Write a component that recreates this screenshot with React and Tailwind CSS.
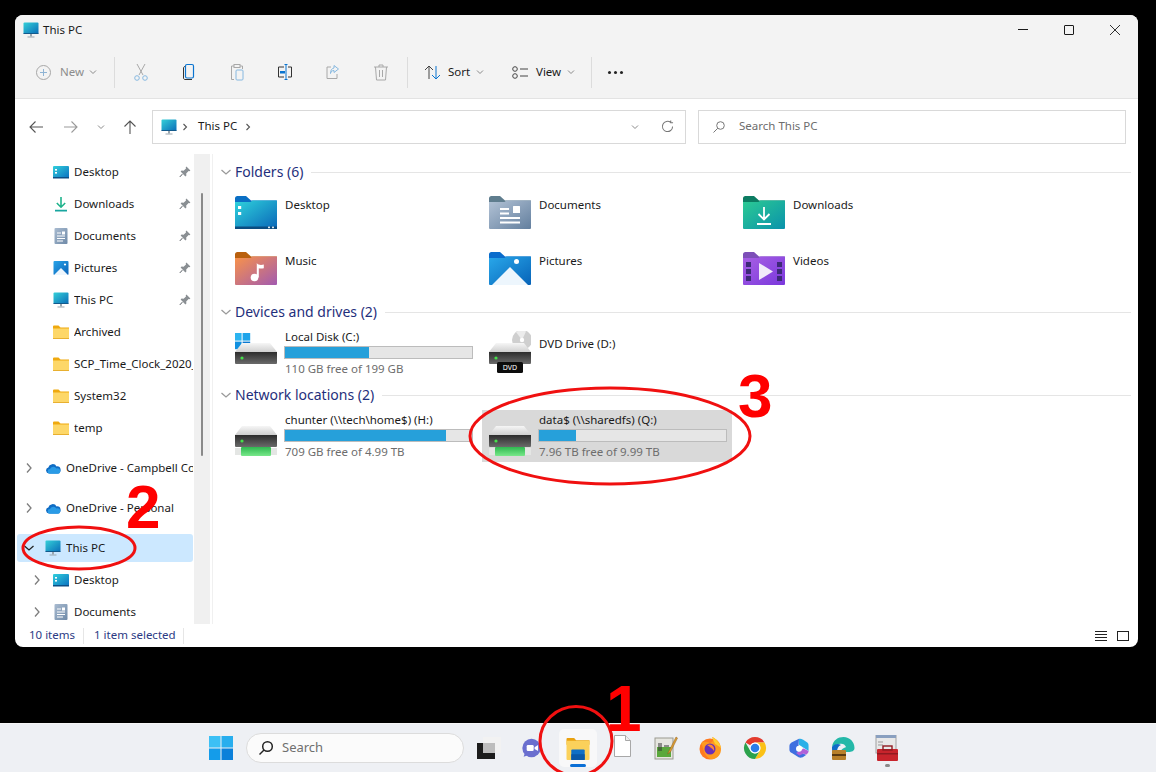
import { useId } from "react";

function Grad({ id, from, to, x2 = 1, y2 = 1 }) {
  return (
    <linearGradient id={id} x1="0" y1="0" x2={x2} y2={y2}>
      <stop offset="0" stopColor={from} />
      <stop offset="1" stopColor={to} />
    </linearGradient>
  );
}

function Monitor({ className = "w-4 h-4" }) {
  const id = useId();
  return (
    <svg viewBox="0 0 16 16" className={className}>
      <defs>
        <Grad id={id} from="#34d0d8" to="#0a6cb8" />
      </defs>
      <rect x="0.5" y="0.5" width="15" height="11.5" rx="1" fill={`url(#${id})`} />
      <rect x="0.5" y="11" width="15" height="1" fill="#135a8c" />
      <rect x="7" y="12" width="2" height="2.5" fill="#9aa5ad" />
      <rect x="4.5" y="14.5" width="7" height="1" fill="#9aa5ad" />
    </svg>
  );
}

function SmallFolder() {
  return (
    <svg viewBox="0 0 16 14" className="w-4 h-[14px]">
      <path d="M0 1.5A1 1 0 0 1 1 .5h4.5l2 2H16V5H0z" fill="#efa90f" />
      <path d="M0 3.5h16V13a1 1 0 0 1-1 1H1a1 1 0 0 1-1-1z" fill="#fdd768" />
      <rect y="13" width="16" height="1" fill="#e8b030" />
    </svg>
  );
}

function SmallDesktop() {
  const id = useId();
  return (
    <svg viewBox="0 0 16 13" className="w-4 h-[13px]">
      <defs>
        <Grad id={id} from="#32d0dc" to="#0a70c0" />
      </defs>
      <rect width="16" height="12" rx="1" fill={`url(#${id})`} />
      <rect y="11" width="16" height="1.5" fill="#0c4f86" />
      <rect x="2" y="3" width="2" height="1.6" fill="#fff" />
      <rect x="2" y="6" width="2" height="1.6" fill="#fff" />
    </svg>
  );
}

function SmallDownload() {
  return (
    <svg viewBox="0 0 16 16" className="w-4 h-4" fill="none" stroke="#1fb38c" strokeWidth="1.6">
      <path d="M8 1v10M3.8 7 8 11.2 12.2 7" />
      <path d="M2 14.6h12" stroke="#19a6a0" />
    </svg>
  );
}

function SmallDoc() {
  const id = useId();
  return (
    <svg viewBox="0 0 16 16" className="w-4 h-4">
      <defs>
        <Grad id={id} from="#a9bbd0" to="#6f8aa8" />
      </defs>
      <rect x="1.5" width="13" height="16" rx="1" fill={`url(#${id})`} />
      <path d="M4 5h4M4 8h8M4 10.5h8M4 13h6" stroke="#fff" strokeWidth="1" />
      <rect x="9" y="3.5" width="3" height="3" fill="#fff" />
    </svg>
  );
}

function SmallPictures() {
  const id = useId();
  return (
    <svg viewBox="0 0 16 16" className="w-4 h-4">
      <defs>
        <Grad id={id} from="#2aa4e8" to="#0a62b8" />
      </defs>
      <rect x="0.5" y="1" width="15" height="14" rx="1" fill={`url(#${id})`} />
      <circle cx="12" cy="4.5" r="1.1" fill="#fff" />
      <path d="M1 15 8 8l7 7z" fill="#eef6fd" />
    </svg>
  );
}

function Cloud() {
  return (
    <svg viewBox="0 0 16 11" className="w-4 h-[11px]">
      <path d="M4 10.5A3 3 0 0 1 3.3 4.6 4.5 4.5 0 0 1 11.6 3.4 3.5 3.5 0 0 1 12.5 10.5z" fill="#0f6cc4" />
      <path d="M5 10.8A2.4 2.4 0 0 1 5 6a3.5 3.5 0 0 1 6.4-.5 2.7 2.7 0 0 1 3.6 3.6 2 2 0 0 1-1.6 1.7z" fill="#2a9be6" />
    </svg>
  );
}

function Pin() {
  return (
    <svg viewBox="0 0 12 12" className="w-3 h-3" fill="#8a8f93">
      <path d="M7.4.6 11.4 4.6 10.4 5.3 9.6 5 7.2 7.4 7.4 9.4 6.4 10.4 1.6 5.6 2.6 4.6 4.6 4.8 7 2.4 6.7 1.6z" />
      <path d="M3.4 8.6 1 11l-.2-.2L3 8.2z" stroke="#8a8f93" strokeWidth="0.8" />
    </svg>
  );
}

function Chev({ dir = "right", className = "" }) {
  const d = dir === "right" ? "M4 1.5 8 6 4 10.5" : "M1.5 4 6 8l4.5-4";
  return (
    <svg viewBox="0 0 12 12" className={`w-3 h-3 ${className}`} fill="none" stroke="currentColor" strokeWidth="1.3">
      <path d={d} />
    </svg>
  );
}

function TinyChev() {
  return (
    <svg viewBox="0 0 8 8" className="w-2 h-2 text-[#8a8a8a]" fill="none" stroke="currentColor" strokeWidth="1">
      <path d="M1 2.5 4 5.5 7 2.5" />
    </svg>
  );
}

function TinyRight() {
  return (
    <svg viewBox="0 0 8 8" className="w-2 h-2 shrink-0" fill="none" stroke="#555" strokeWidth="1.1">
      <path d="M2.500 1 5.500 4 2.500 7" />
    </svg>
  );
}

function LibFolder({ from, to, tab, children }) {
  const id = useId();
  return (
    <svg viewBox="0 0 42 33" className="w-[42px] h-[33px] shrink-0">
      <defs>
        <Grad id={id} from={from} to={to} />
      </defs>
      <path d="M0 2.5A2.5 2.5 0 0 1 2.5 0h8.5l5 4.5h26V9H0z" fill={tab} />
      <path d="M0 6h15.5l2-1.6H41a1 1 0 0 1 1 1V32a1 1 0 0 1-1 1H1a1 1 0 0 1-1-1z" fill={`url(#${id})`} />
      {children}
    </svg>
  );
}

const folderIcons = {
  Desktop: (
    <LibFolder from="#2fd3dc" to="#0a66b8" tab="#0a6fc4">
      <rect y="30.5" width="42" height="2.5" fill="#0b4c80" />
      <rect x="3" y="10" width="3.2" height="3" fill="#fff" />
      <rect x="3" y="16" width="3.2" height="3" fill="#fff" />
      <rect x="33" y="30.6" width="2" height="1.6" fill="#dfe8ee" />
      <rect x="37" y="30.6" width="2" height="1.6" fill="#dfe8ee" />
    </LibFolder>
  ),
  Documents: (
    <LibFolder from="#b3c3d6" to="#637f9e" tab="#5f7d8e">
      <path d="M11 13h9M11 17.5h9M11 22h20M11 26.5h20" stroke="#fff" strokeWidth="1.8" />
      <rect x="24" y="10" width="7" height="7" rx="0.6" fill="#fff" />
    </LibFolder>
  ),
  Downloads: (
    <LibFolder from="#2ccb93" to="#0a92ab" tab="#0c7c62">
      <path d="M21 11v12M15.5 18l5.5 5.5 5.5-5.5" stroke="#fff" strokeWidth="1.8" fill="none" />
      <path d="M14 28h14" stroke="#fff" strokeWidth="1.8" />
    </LibFolder>
  ),
  Music: (
    <LibFolder from="#f99349" to="#a25ab0" tab="#b9600e">
      <circle cx="19.5" cy="25.5" r="3.8" fill="#fff" />
      <path d="M21.8 25.5V11c1.2 2.4 5 2 7 1.6v3.6c-2 .4-3.8.4-5 0v9.3z" fill="#fff" />
    </LibFolder>
  ),
  Pictures: (
    <LibFolder from="#29a8ea" to="#0763b8" tab="#0a6ccc">
      <circle cx="27.5" cy="9.5" r="2.5" fill="#fff" />
      <path d="M3 33 21 15l18 18z" fill="#edf6fd" />
    </LibFolder>
  ),
  Videos: (
    <LibFolder from="#a860e4" to="#7a38dc" tab="#7d4fb8">
      <path d="M16 11l14 8.5L16 28z" fill="#f1eafa" />
      <path d="M3 10h5v5H3zM3 17h5v5H3zM3 24h5v5H3zM34 10h5v5h-5zM34 17h5v5h-5zM34 24h5v5h-5z" fill="#3d2a78" />
    </LibFolder>
  ),
};

function DriveIcon({ kind }) {
  const id = useId();
  const id2 = useId();
  const id3 = useId();
  return (
    <svg viewBox="0 0 42 44" className="w-[42px] h-[44px] shrink-0">
      <defs>
        <Grad id={id} from="#f6f6f6" to="#cfcfcf" x2={0} />
        <Grad id={id2} from="#2c2c2c" to="#6a6a6a" x2={0} />
        <Grad id={id3} from="#2fb850" to="#78e88a" x2={0} />
      </defs>
      {kind === "local" && (
        <g>
          <rect x="-1" y="2" width="7.6" height="7.6" fill="#2cb4f0" />
          <rect x="7.600" y="2" width="7.6" height="7.6" fill="#1ea4ea" />
          <rect x="-1" y="10.600" width="7.6" height="7.6" fill="#1090e0" />
          <rect x="7.600" y="10.600" width="7.6" height="7.6" fill="#0a78d0" />
        </g>
      )}
      {kind === "dvd" && (
        <g>
          <circle cx="33" cy="9" r="10" fill="#cfcfcf" />
          <path d="M33 9 27 1a10 10 0 0 1 10-.6z" fill="#ececec" />
          <circle cx="33" cy="9" r="2.200" fill="#fff" />
        </g>
      )}
      <path d="M7 12h28l7 9H0z" fill={`url(#${id})`} />
      <path d="M0 21h42v11a1 1 0 0 1-1 1H1a1 1 0 0 1-1-1z" fill={`url(#${id2})`} />
      <circle cx="7" cy="27" r="1.6" fill="#45e04a" />
      {kind === "net" && (
        <g>
          <rect x="0" y="34" width="42" height="7" fill="#e4e6e4" />
          <rect x="6" y="33" width="30" height="9" rx="1" fill={`url(#${id3})`} />
        </g>
      )}
      {kind === "dvd" && <rect x="8" y="31" width="26" height="11" rx="1.500" fill="#0c0c0c" />}
    </svg>
  );
}

function Sep() {
  return <div className="w-px h-[31px] bg-[#dcdcdc] shrink-0" />;
}

function ToolIcon({ children }) {
  return (
    <div className="w-12 flex justify-center shrink-0">
      <svg viewBox="0 0 18 18" className="w-[18px] h-[18px]" fill="none" strokeWidth="1">
        {children}
      </svg>
    </div>
  );
}

function SideRow({ icon, label, level = 1, chevron, pinned, selected }) {
  return (
    <div className="h-8 py-0.5 pl-[2px]">
      <div className={`w-[176px] h-7 flex items-center rounded-[3px] ${selected ? "bg-[#cce8ff]" : ""} ${level === 1 ? "pl-[12px]" : "pl-[4px]"}`}>
        <div className="w-4 shrink-0 flex justify-center">
          {chevron === "right" && <Chev className="text-[#7d7d7d]" />}
          {chevron === "down" && <Chev dir="down" className="text-[#222]" />}
        </div>
        <div className="ml-2 w-4 shrink-0 flex justify-center">{icon}</div>
        <span className="ml-[5px] flex-1 min-w-0 overflow-hidden whitespace-nowrap text-[#1a1a1a]">{label}</span>
        {pinned && (
          <span className="mr-[2px] ml-1 shrink-0">
            <Pin />
          </span>
        )}
      </div>
    </div>
  );
}

function Heading({ label, mt }) {
  return (
    <div className={`flex items-center h-5 ${mt}`}>
      <Chev dir="down" className="text-[#9a9a9a]" />
      <span className="ml-[3px] text-[14px] leading-5 text-[#1f2f7c] whitespace-nowrap">{label}</span>
      <div className="ml-2 flex-1 h-px bg-[#e5e5e5]" />
    </div>
  );
}

function FolderTile({ name }) {
  return (
    <div className="h-[52px] pl-[7px] pt-1 flex">
      {folderIcons[name]}
      <span className="ml-2 mt-[1px] text-[#1a1a1a]">{name}</span>
    </div>
  );
}

function DriveTile({ kind, name, pct, free, selected }) {
  return (
    <div className={`w-[250px] h-[52px] flex pl-[7px] pt-1 ${selected ? "bg-[#d9d9d9]" : ""}`}>
      <DriveIcon kind={kind} />
      <div className="ml-[7px] w-[189px] -mt-[2px]">
        <div className="h-4 pl-px text-[#1a1a1a] whitespace-nowrap">{name}</div>
        <div className="mt-[1px] h-[13px] border border-[#bcbcbc] bg-[#e6e6e6]">
          <div className="h-full bg-[#26a0da]" style={{ width: `${pct}%` }} />
        </div>
        <div className="mt-[2px] h-4 pl-px text-[#6d6d6d] whitespace-nowrap">{free}</div>
      </div>
    </div>
  );
}

function TaskIcon({ className, children, viewBox = "0 0 24 24" }) {
  return (
    <svg viewBox={viewBox} className={`shrink-0 ${className}`}>
      {children}
    </svg>
  );
}

function Taskbar() {
  return (
    <div className="h-[49px] bg-[#eef0f4] border-t border-[#f6f6f6] flex items-center pl-[209px]">
      <TaskIcon className="w-[24px] h-[24px]">
        <rect x="0" y="0" width="11.5" height="11.5" fill="#3cc0f5" />
        <rect x="12.5" y="0" width="11.5" height="11.5" fill="#28aeee" />
        <rect x="0" y="12.5" width="11.5" height="11.5" fill="#149cea" />
        <rect x="12.5" y="12.5" width="11.5" height="11.5" fill="#0a80da" />
      </TaskIcon>
      <div className="ml-[13px] w-[218px] h-[30px] rounded-full bg-[#fbfbfb] border border-[#dcdcdc] flex items-center pl-[11px]">
        <svg viewBox="0 0 16 16" className="w-4 h-4" fill="none" stroke="#222" strokeWidth="1.5">
          <circle cx="9.5" cy="6.5" r="4.8" />
          <path d="M6 10 1.5 14.5" />
        </svg>
        <span className="ml-[8px] pb-[2px] text-[13px] text-[#6f6f6f]">Search</span>
      </div>
      <TaskIcon className="ml-[13px] w-6 h-[22px]" viewBox="0 0 24 22">
        <rect x="6" y="0" width="18" height="16" fill="#f2f2f2" />
        <rect x="0" y="6" width="18" height="16" fill="#1c1c1c" />
        <rect x="6" y="6" width="12" height="10" fill="#bdbdbd" />
      </TaskIcon>
      <TaskIcon className="ml-[20px] w-[21px] h-[24px]">
        <circle cx="12" cy="12" r="10.5" fill="#6a6fcf" />
        <path d="M3 22l2-6 4 4z" fill="#6a6fcf" />
        <rect x="6.5" y="8.5" width="8" height="7" rx="1.5" fill="#fff" />
        <path d="M15.5 11l4-2.4v6.8l-4-2.4z" fill="#fff" />
      </TaskIcon>
      <div className="ml-[17px] w-[38px] h-[38px] rounded-[5px] bg-[#f8f8f9] flex flex-col items-center pt-2">
        <TaskIcon className="w-6 h-[23px]">
          <path d="M0 2a1 1 0 0 1 1-1h7l2 2.5h14V8H0z" fill="#e9a10f" />
          <path d="M0 4h24v19a1 1 0 0 1-1 1H1a1 1 0 0 1-1-1z" fill="#fbd15b" />
          <rect x="5" y="13" width="14" height="11" rx="1" fill="#0f6fc6" />
          <rect x="5" y="18" width="14" height="6" fill="#0a58a8" />
        </TaskIcon>
        <div className="mt-[4px] w-4 h-[3px] rounded-full bg-[#0a6fd6]" />
      </div>
      <TaskIcon className="ml-[17px] w-[17px] h-[22px] -mt-[5px]" viewBox="0 0 17 22">
        <path d="M.5.5h11l5 5v16H.5z" fill="#fff" stroke="#a8a8a8" />
        <path d="M11.5.5v5h5" fill="#eee" stroke="#a8a8a8" />
      </TaskIcon>
      <TaskIcon className="ml-[23px] w-6 h-6">
        <rect x="1" y="2" width="18" height="21" fill="#e6e6e0" stroke="#9a9a90" />
        <rect x="3" y="11" width="14" height="10" fill="#5aa83c" />
        <path d="M5 7v8M7 7v8M10 10h5" stroke="#333" strokeWidth="1" />
        <path d="M22 1 15 15l-1.5 3 3-2L23.5 2z" fill="#e0a030" stroke="#8a5a20" strokeWidth="0.5" />
      </TaskIcon>
      <TaskIcon className="ml-[20px] w-6 h-6">
        <circle cx="12" cy="13" r="10.5" fill="#ff7a1f" />
        <path d="M3 7c3 5 2 12 9 16 7 1 11-4 11-10S19 3 14 1c2 3 1 5-2 6-3-1-6-2-9 0z" fill="#ff9a20" />
        <path d="M14 1c4 2 8 6 9 11-2-2-4-3-6-4z" fill="#ffcf30" />
        <circle cx="12" cy="13" r="5.5" fill="#6a2fb8" />
        <path d="M9 9c5-2 8 2 7 6-2-3-4-4-7-6z" fill="#ff8a30" />
      </TaskIcon>
      <TaskIcon className="ml-[21px] w-6 h-6">
        <path d="M12 1a11 11 0 0 1 9.53 5.5H12a5.5 5.5 0 0 0-4.76 2.75L2.47 6.5A11 11 0 0 1 12 1z" fill="#e33b2e" />
        <path d="M21.53 6.5A11 11 0 0 1 12 23l4.76-8.25A5.5 5.5 0 0 0 12 6.5z" fill="#fbc116" />
        <path d="M2.47 6.5l4.77 8.25a5.5 5.5 0 0 0 9.52 0L12 23A11 11 0 0 1 2.47 6.5z" fill="#2ba24c" />
        <circle cx="12" cy="12" r="5.4" fill="#fff" />
        <circle cx="12" cy="12" r="4.3" fill="#2b7de9" />
      </TaskIcon>
      <TaskIcon className="ml-[22px] w-[20px] h-[24px]">
        <path d="M12 1 3 5.5C1 7 .5 8 .5 10v4c0 2 1 3 3 4l8 5c2 1 3 .5 5 0l4-2.5-6-3.5-3 1.5V8z" fill="#3f6fe0" />
        <path d="M12 1c2-.5 3 0 5 1l5 3.5c1 1 1.500 2 1.500 4v6L18 12l-6-4z" fill="#2ab0e8" />
        <path d="M23.500 15.500c0 2-1 3-3 4.500l-3-1.500-5 2.500-4-3 6-3.500 3-2z" fill="#b060d8" />
        <circle cx="12" cy="13" r="3.600" fill="#fff" />
      </TaskIcon>
      <TaskIcon className="ml-[22px] w-6 h-6">
        <path d="M1 11C2 4 7 1 12.500 1 19 1 23.500 6 23.500 12c0 3-3 4-6 4H10c0-3 3-4 5-5-1-3-4-4-7-3-4 1-6 2-7 3z" fill="#24b8a8" />
        <path d="M1 11c2-3 6-4 9-2-3 1-4 4-4 7 0 3 2 6 6 7C5 23 .5 18 1 11z" fill="#0f6cc8" />
        <rect x="1" y="14" width="14" height="10" rx="1" fill="#b8802a" />
        <rect x="1" y="18" width="14" height="2" fill="#5a3a10" />
      </TaskIcon>
      <div className="ml-[20px] w-6 flex flex-col items-center pt-[5px]">
        <TaskIcon className="w-6 h-[28px]" viewBox="0 0 24 28">
          <rect x="1" y="0" width="20" height="18" fill="#e8e8e8" stroke="#a0a0a0" />
          <rect x="1" y="0" width="20" height="3" fill="#8aa0c0" />
          <path d="M3 7h5M3 10h5" stroke="#999" />
          <rect x="2" y="14" width="21" height="12" rx="1" fill="#c8242c" />
          <rect x="8" y="11" width="9" height="4" fill="none" stroke="#901a20" strokeWidth="1.400" />
          <rect x="2" y="18" width="21" height="1.500" fill="#901a20" />
        </TaskIcon>
        <div className="mt-[1px] w-[5px] h-[3px] rounded-full bg-[#8a8a8a]" />
      </div>
    </div>
  );
}

export default function App() {
  return (
    <div className="relative w-[1156px] h-[772px] bg-black overflow-hidden flex flex-col text-[11.5px] leading-4 font-['Noto_Sans',sans-serif]">
      <div className="mt-[15px] ml-[15px] w-[1123px] h-[632px] rounded-lg bg-white overflow-hidden flex flex-col">
        {/* title + command bar */}
        <div className="h-[84px] shrink-0 bg-[#f3f3f3] border-b border-[#e3e3e3]">
          <div className="h-[31px] flex items-center pl-2 pb-[2px]">
            <Monitor />
            <span className="ml-1 text-[#1a1a1a]">This PC</span>
            <div className="ml-auto flex items-center text-[#1a1a1a]">
              <div className="w-[46px] flex justify-center">
                <div className="w-[10px] h-px bg-[#1a1a1a]" />
              </div>
              <div className="w-[46px] flex justify-center">
                <div className="w-[10px] h-[10px] border border-[#1a1a1a] rounded-[1px]" />
              </div>
              <div className="w-[46px] flex justify-center">
                <svg viewBox="0 0 10 10" className="w-[10px] h-[10px]" stroke="#1a1a1a" strokeWidth="0.9">
                  <path d="M0 0l10 10M10 0 0 10" />
                </svg>
              </div>
            </div>
          </div>
          <div className="h-[52px] flex items-center">
            <div className="ml-[21px] w-[78px] flex items-center">
              <svg viewBox="0 0 15 15" className="w-[15px] h-[15px]" fill="none" stroke="#a6a6a6">
                <circle cx="7.5" cy="7.500" r="7" />
                <path d="M7.500 4v7M4 7.500h7" stroke="#8fb4d4" />
              </svg>
              <span className="ml-[9px] w-[29px] text-[#8c8c8c]">New</span>
              <TinyChev />
            </div>
            <Sep />
            <div className="ml-[2px] flex">
              <ToolIcon>
                <path d="M5 1l6 11M13 1 7 12" stroke="#a8a8a8" />
                <circle cx="5" cy="15" r="2.300" stroke="#86b8e0" />
                <circle cx="13" cy="15" r="2.300" stroke="#86b8e0" />
              </ToolIcon>
              <ToolIcon>
                <rect x="5.500" y="1.500" width="8" height="13.500" rx="1.500" stroke="#0a74d0" strokeWidth="1.200" />
                <path d="M5 3.500c-.8 0-1.500.7-1.500 1.500v10c0 1 .8 1.500 1.500 1.500h7" stroke="#333" />
              </ToolIcon>
              <ToolIcon>
                <path d="M6 3H3.500v13.500H6M12 3h2.500v3" stroke="#a8a8a8" />
                <rect x="6" y="1.500" width="6" height="3" stroke="#a8a8a8" />
                <rect x="8" y="7" width="7" height="10" rx="1" stroke="#86b8e0" />
              </ToolIcon>
              <ToolIcon>
                <path d="M8 4H2.500v10H8M12 4h3.500v10H12" stroke="#333" />
                <rect x="4" y="8" width="5" height="2.500" fill="#0a74d0" />
                <path d="M10 2v14M8.500 1.500h3M8.500 16.500h3" stroke="#0a74d0" />
              </ToolIcon>
              <ToolIcon>
                <path d="M13 11v4.500H3V4h4" stroke="#a8a8a8" />
                <path d="M10 2.500 14.500 6 10 9.500V7.500c-2 0-3 1-3.500 3 0-3 1-5 3.500-5.500z" stroke="#86b8e0" />
              </ToolIcon>
              <ToolIcon>
                <path d="M2 4h14M7 4V2h4v2M3.500 4l1 13h9l1-13M7.500 7v7M10.500 7v7" stroke="#a8a8a8" />
              </ToolIcon>
            </div>
            <div className="ml-[2px]">
              <Sep />
            </div>
            <svg viewBox="0 0 17 15" className="ml-4 w-[17px] h-[15px]" fill="none">
              <path d="M5 14V1M1 5l4-4 4 4" stroke="#444" />
              <path d="M12 1v13M8 10l4 4 4-4" stroke="#0a74d0" />
            </svg>
            <span className="ml-[7px] w-[28px] text-[#1a1a1a]">Sort</span>
            <TinyChev />
            <svg viewBox="0 0 16 13" className="ml-[28px] w-4 h-[13px]" fill="none" stroke="#444">
              <circle cx="3" cy="3" r="2.300" />
              <circle cx="3" cy="10" r="2.300" />
              <path d="M8 3h8M8 10h8" />
            </svg>
            <span className="ml-2 w-[31px] text-[#1a1a1a]">View</span>
            <TinyChev />
            <div className="ml-4">
              <Sep />
            </div>
            <div className="ml-4 flex gap-[3px]">
              <div className="w-[3px] h-[3px] rounded-full bg-[#222]" />
              <div className="w-[3px] h-[3px] rounded-full bg-[#222]" />
              <div className="w-[3px] h-[3px] rounded-full bg-[#222]" />
            </div>
          </div>
        </div>

        {/* address row */}
        <div className="h-[55px] shrink-0 flex items-center pl-[3px]">
          <div className="w-9 flex justify-center">
            <svg viewBox="0 0 14 14" className="w-[14px] h-[14px]" fill="none" stroke="#555" strokeWidth="1.100">
              <path d="M14 7H1M6.500 1.500 1 7l5.500 5.500" />
            </svg>
          </div>
          <div className="w-[34px] flex justify-center">
            <svg viewBox="0 0 14 14" className="w-[14px] h-[14px]" fill="none" stroke="#9a9a9a" strokeWidth="1.100">
              <path d="M0 7h13M7.500 1.500 13 7l-5.500 5.500" />
            </svg>
          </div>
          <div className="w-[26px] flex justify-center">
            <TinyChev />
          </div>
          <div className="w-8 flex justify-center">
            <svg viewBox="0 0 14 14" className="w-[14px] h-[14px]" fill="none" stroke="#555" strokeWidth="1.100">
              <path d="M7 14V1M1.500 6.500 7 1l5.500 5.500" />
            </svg>
          </div>
          <div className="ml-[6px] w-[534px] h-[34px] bg-white border border-[#d9d9d9] flex items-center pl-2">
            <Monitor />
            <span className="ml-1">
              <TinyRight />
            </span>
            <span className="ml-[9px] w-[39px] pb-[2px] whitespace-nowrap text-[#1a1a1a]">This PC</span>
            <span className="ml-[7px]">
              <TinyRight />
            </span>
            <span className="ml-auto">
              <TinyChev />
            </span>
            <svg viewBox="0 0 14 14" className="ml-[22px] mr-[11px] w-[13px] h-[13px]" fill="none" stroke="#777" strokeWidth="1.100">
              <path d="M12.500 7A5.500 5.500 0 1 1 10.500 2.700M10.500.500v2.500H13" />
            </svg>
          </div>
          <div className="ml-3 w-[428px] h-[34px] bg-white border border-[#d9d9d9] flex items-center pl-[14px]">
            <svg viewBox="0 0 12 12" className="w-3 h-3" fill="none" stroke="#777">
              <circle cx="7.500" cy="4.500" r="3.800" />
              <path d="M4.800 7.200.500 11.500" />
            </svg>
            <span className="ml-[14px] pb-[2px] text-[#6d6d6d]">Search This PC</span>
          </div>
        </div>

        {/* body */}
        <div className="h-[470px] shrink-0 flex">
          <div className="w-[179px] shrink-0 pt-[2px] overflow-hidden">
            <SideRow icon={<SmallDesktop />} label="Desktop" pinned />
            <SideRow icon={<SmallDownload />} label="Downloads" pinned />
            <SideRow icon={<SmallDoc />} label="Documents" pinned />
            <SideRow icon={<SmallPictures />} label="Pictures" pinned />
            <SideRow icon={<Monitor />} label="This PC" pinned />
            <SideRow icon={<SmallFolder />} label="Archived" />
            <SideRow icon={<SmallFolder />} label="SCP_Time_Clock_2020_Final" />
            <SideRow icon={<SmallFolder />} label="System32" />
            <SideRow icon={<SmallFolder />} label="temp" />
            <div className="mt-2">
              <SideRow icon={<Cloud />} label="OneDrive - Campbell County" level={0} chevron="right" />
            </div>
            <div className="mt-2">
              <SideRow icon={<Cloud />} label="OneDrive - Personal" level={0} chevron="right" />
            </div>
            <div className="mt-2">
              <SideRow icon={<Monitor />} label="This PC" level={0} chevron="down" selected />
            </div>
            <SideRow icon={<SmallDesktop />} label="Desktop" chevron="right" />
            <SideRow icon={<SmallDoc />} label="Documents" chevron="right" />
          </div>
          <div className="w-4 shrink-0 bg-[#f0f0f0] flex justify-center pt-[39px]">
            <div className="w-[2px] h-[263px] bg-[#8a8a8a] rounded-full" />
          </div>
          <div className="ml-[2px] flex-1 border-l border-[#f0f0f0] pl-[7px] pr-[7px] pt-2">
            <Heading label="Folders (6)" />
            <div className="mt-[10px] ml-2 grid grid-cols-[254px_254px_254px] gap-y-1">
              {["Desktop", "Documents", "Downloads", "Music", "Pictures", "Videos"].map((name) => (
                <FolderTile key={name} name={name} />
              ))}
            </div>
            <Heading label="Devices and drives (2)" mt="mt-[2px]" />
            <div className="mt-[5px] ml-2 grid grid-cols-[254px_254px]">
              <DriveTile kind="local" name="Local Disk (C:)" pct={45} free="110 GB free of 199 GB" />
              <div className="h-[52px] pl-[7px] pt-1 flex relative">
                <DriveIcon kind="dvd" />
                <span className="absolute left-[15px] top-[35px] w-[26px] h-[11px] flex items-center justify-center text-[7px] leading-none text-white">DVD</span>
                <span className="ml-2 mt-[5px] text-[#1a1a1a]">DVD Drive (D:)</span>
              </div>
            </div>
            <Heading label="Network locations (2)" mt="mt-[6px]" />
            <div className="mt-[5px] ml-2 grid grid-cols-[254px_254px]">
              <DriveTile kind="net" name="chunter (\\tech\home$) (H:)" pct={86} free="709 GB free of 4.99 TB" />
              <DriveTile kind="net" name="data$ (\\sharedfs) (Q:)" pct={20} free="7.96 TB free of 9.99 TB" selected />
            </div>
          </div>
        </div>

        {/* status bar */}
        <div className="h-[23px] shrink-0 flex items-center pl-[14px] text-[#2b3a84]">
          <span className="w-[44px] pb-[2px] whitespace-nowrap">10 items</span>
          <div className="ml-[10px] w-px h-4 bg-[#e6e6e6]" />
          <span className="ml-[10px] w-[79px] pb-[2px] whitespace-nowrap">1 item selected</span>
          <div className="ml-[10px] w-px h-4 bg-[#e6e6e6]" />
          <svg viewBox="0 0 12 10" className="ml-auto w-3 h-[10px]" stroke="#222">
            <path d="M0 .5h12M0 3.500h12M0 6.500h12M0 9.500h12" />
          </svg>
          <div className="ml-[10px] mr-[9px] w-3 h-[10px] border border-[#222]" />
        </div>
      </div>

      <div className="flex-1" />
      <Taskbar />

      {/* red annotations */}
      <svg viewBox="0 0 1156 772" className="absolute left-0 top-0 w-[1156px] h-[772px] pointer-events-none" fill="none" stroke="#f01010" strokeWidth="3">
        <ellipse cx="79" cy="548" rx="56" ry="21" />
        <ellipse cx="610" cy="436" rx="140" ry="48" />
        <ellipse cx="576" cy="741" rx="36" ry="34.500" />
      </svg>
      <span className="absolute left-[126px] top-[472px] text-[62px] leading-[70px] font-bold text-[#ff0000] font-['Liberation_Sans',sans-serif]">2</span>
      <span className="absolute left-[738px] top-[361px] text-[62px] leading-[70px] font-bold text-[#ff0000] font-['Liberation_Sans',sans-serif]">3</span>
      <span className="absolute left-[606px] top-[674px] text-[64px] leading-[70px] font-bold text-[#ff0000] font-['Liberation_Sans',sans-serif]">1</span>
    </div>
  );
}
